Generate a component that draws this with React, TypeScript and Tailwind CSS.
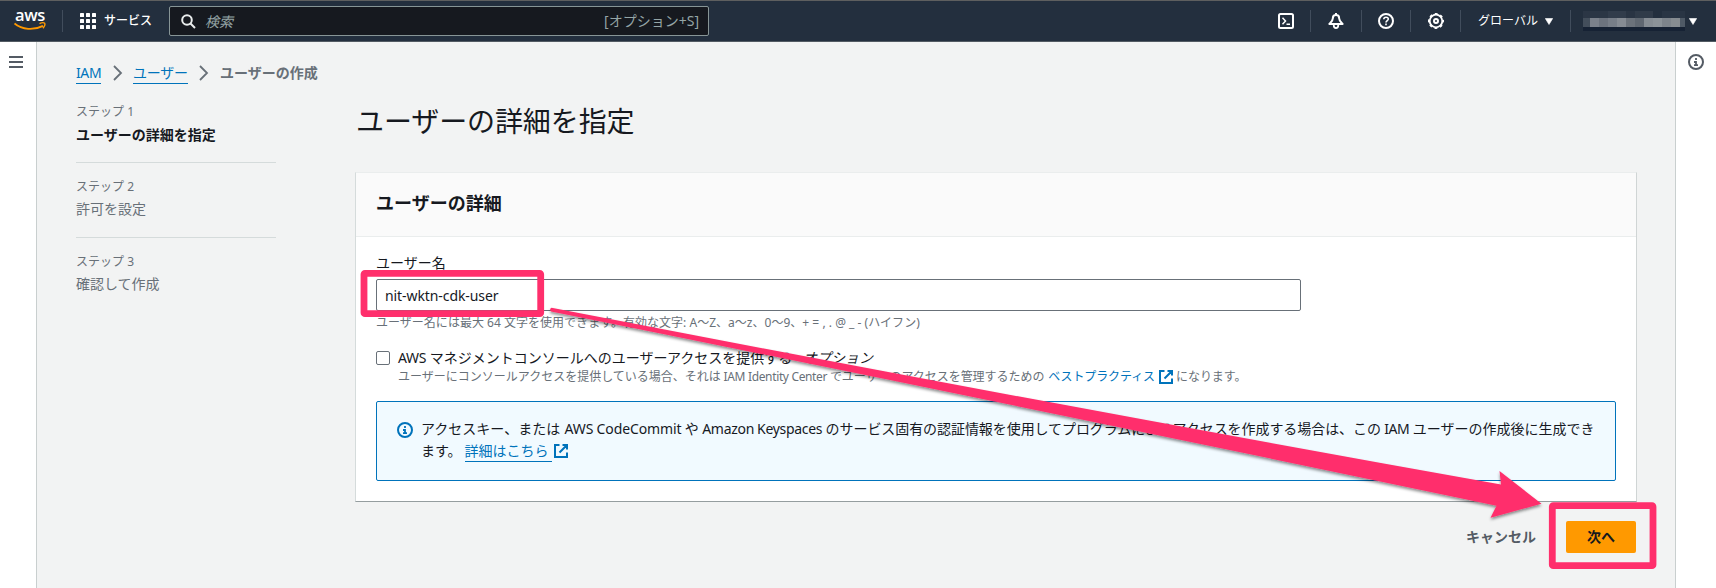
import type { ReactNode } from "react";

const ja = "font-['Noto_Sans','Noto_Sans_CJK_JP',sans-serif]";

function Divider() {
  return <span className="h-[22px] w-px bg-[#414d5c]" />;
}

function Caret() {
  return (
    <svg width="8" height="7" viewBox="0 0 8 7" className="shrink-0">
      <path d="M0.3 0.5h7.4L4 6.5z" fill="#fff" stroke="#fff" strokeWidth="0.6" strokeLinejoin="round" />
    </svg>
  );
}

function InfoIcon({ className }: { className: string }) {
  return (
    <svg width="16" height="16" viewBox="0 0 16 16" className={className} fill="none" stroke="currentColor" strokeWidth="2">
      <circle cx="8" cy="8" r="7" />
      <path d="M6 8h2v3M6 11.2h4M8 6V4" strokeWidth="1.8" />
    </svg>
  );
}

function ExternalIcon({ className }: { className: string }) {
  return (
    <svg width="14" height="14" viewBox="0 0 14 14" className={className} fill="none" stroke="currentColor" strokeWidth="2">
      <path d="M13 8.5V13H1V1h4.5M8.5 1H13v4.5M13 1L5.5 8.5" />
    </svg>
  );
}

function Chevron() {
  return (
    <svg width="10" height="16" viewBox="0 0 10 16" fill="none" stroke="#687078" strokeWidth="1.8">
      <path d="M1 1l7 7-7 7" />
    </svg>
  );
}

function Latin({ children, className }: { children: ReactNode; className: string }) {
  return <span className={className}>{children}</span>;
}

function AwsLogo() {
  return (
    <span className="relative block h-[22px] w-[34px]">
      <span className="absolute left-[1px] top-[-5px] font-['Open_Sans',sans-serif] text-[16.5px] font-semibold leading-[20px] tracking-[-0.4px] text-white">
        aws
      </span>
      <svg width="34" height="22" viewBox="0 0 34 22" className="absolute left-0 top-0" fill="none" stroke="#ff9900">
        <path d="M0.5 13.5C8 20 20 20.5 29 15.8" strokeWidth="1.9" />
        <path d="M25.5 13.6c2-1 4.5-1 5.2-.4.4.8-.3 3.3-1.8 5" strokeWidth="1.4" />
      </svg>
    </span>
  );
}

function Header() {
  return (
    <header className="flex h-[42px] shrink-0 items-center border-b border-t border-b-[#535b63] border-t-[#5e5f5f] bg-[#232f3e] text-white">
      <div className="flex w-[169px] items-center">
        <div className="ml-[14px] w-[48px]">
          <AwsLogo />
        </div>
        <Divider />
        <svg width="16" height="16" viewBox="0 0 16 16" fill="#fff" className="ml-[17px]">
          {[0, 6, 12].map((y) => [0, 6, 12].map((x) => <rect key={`${x}-${y}`} x={x} y={y} width="4" height="4" rx="0.6" />))}
        </svg>
        <span className="ml-[8px] pb-px text-[12px] font-medium leading-[18px]">サービス</span>
      </div>
      <div className="flex h-[30px] w-[540px] items-center rounded-[2px] border border-[#879596] bg-[#16191f] text-[14px] text-[#95a5a6]">
        <svg width="15" height="15" viewBox="0 0 15 15" fill="none" stroke="#eaeded" strokeWidth="2" className="ml-[11px]">
          <circle cx="6" cy="6" r="4.8" />
          <path d="M9.5 9.5l4.5 4.5" />
        </svg>
        <span className="ml-[9px] italic">検索</span>
        <span className="ml-auto mr-[9px] pb-px">[オプション+S]</span>
      </div>
      <div className="ml-auto flex items-center">
        <svg width="16" height="16" viewBox="0 0 16 16" fill="none" stroke="#fff" strokeWidth="2">
          <rect x="1" y="1" width="14" height="14" rx="1.5" />
          <path d="M4.5 4.8L7.5 8l-3 3.2M8.5 11.3H12" strokeWidth="1.5" />
        </svg>
        <span className="ml-[16px] mr-[17px] flex"><Divider /></span>
        <svg width="16" height="16" viewBox="0 0 16 16" fill="none" stroke="#fff" strokeWidth="2" strokeLinejoin="round">
          <path d="M8 2C5.6 2 4.8 3.8 4.8 5.4 4.8 7.6 3.4 8.8 1.4 11h13.2C12.6 8.8 11.2 7.6 11.2 5.4 11.2 3.8 10.4 2 8 2zM8 0v2" />
          <path d="M5.8 11.5v1.3a2.2 2.2 0 0 0 4.4 0v-1.3" strokeWidth="1.8" />
        </svg>
        <span className="ml-[17px] mr-[16px] flex"><Divider /></span>
        <svg width="16" height="16" viewBox="0 0 16 16" fill="none" stroke="#fff" strokeWidth="2">
          <circle cx="8" cy="8" r="7" />
          <path d="M5.8 6.3C5.8 3.5 10.3 3.6 10.3 6.1 10.3 7.6 8 7.7 8 9.6M8 10.6v1.7" strokeWidth="1.6" />
        </svg>
        <span className="ml-[16px] mr-[17px] flex"><Divider /></span>
        <svg width="16" height="16" viewBox="0 0 16 16" fill="none" stroke="#fff">
          <circle cx="8" cy="8" r="6.3" strokeWidth="1.8" />
          <circle cx="8" cy="8" r="7.3" strokeWidth="1.4" strokeDasharray="2.9 2.834" strokeDashoffset="1.45" />
          <circle cx="8" cy="8" r="2" strokeWidth="2" />
        </svg>
        <span className="ml-[16px] mr-[17px] flex"><Divider /></span>
        <span className="pb-px text-[12px] leading-[18px]">グローバル</span>
        <span className="ml-[7px]"><Caret /></span>
        <span className="ml-[17px] mr-[12px] flex"><Divider /></span>
        <div className="flex h-[20px] w-[102px] flex-col">
          <div className="flex h-[7px]">
            <span className="w-[25px] bg-[#2b3645]" />
            <span className="w-[18px] bg-[#313c4b]" />
            <span className="w-[9px] bg-[#293443]" />
            <span className="w-[18px] bg-[#303b49]" />
            <span className="w-[9px] bg-[#232f3e]" />
            <span className="w-[23px] bg-[#293544]" />
          </div>
          <div className="flex h-[9px]">
            <span className="w-[7px] bg-[#434e5b]" />
            <span className="w-[9px] bg-[#7b818b]" />
            <span className="w-[9px] bg-[#6c737e]" />
            <span className="w-[9px] bg-[#777e88]" />
            <span className="w-[9px] bg-[#858b93]" />
            <span className="w-[9px] bg-[#6b727b]" />
            <span className="w-[9px] bg-[#5f6771]" />
            <span className="w-[9px] bg-[#858c93]" />
            <span className="w-[9px] bg-[#8b9298]" />
            <span className="w-[9px] bg-[#7d848b]" />
            <span className="w-[9px] bg-[#868c91]" />
            <span className="w-[5px] bg-[#4f5a66]" />
          </div>
          <div className="h-[4px] bg-[#162234]" />
        </div>
        <span className="ml-[4px] mr-[19px]"><Caret /></span>
      </div>
    </header>
  );
}

function Step({ n, title, active, last }: { n: number; title: string; active?: boolean; last?: boolean }) {
  return (
    <li className={last ? "" : "mb-[13px] h-[62px] border-b border-[#d5dbdb]"}>
      <div className="text-[12px] leading-[22px] text-[#687078]">ステップ {n}</div>
      <div className={active ? "text-[14px] font-bold leading-[23px] text-[#16191f]" : "text-[14px] leading-[22px] text-[#687078]"}>
        {title}
      </div>
    </li>
  );
}

function UserCard() {
  return (
    <section className="h-[330px] w-[1282px] border border-b-[#959d9f] border-l-[#d5dbdb] border-r-[#d0d5d5] border-t-[#eaeded] bg-white">
      <div className="flex h-[64px] items-center border-b border-[#eaeded] bg-[#fafafa] px-5">
        <h2 className="pb-[4px] text-[18px] font-bold leading-[22px]">ユーザーの詳細</h2>
      </div>
      <div className="px-5 pt-[15px]">
        <label className="block text-[14px] leading-[22px]">ユーザー名</label>
        <div className="mt-[5px] flex h-[32px] w-[925px] items-center rounded-[2px] border border-[#687078] pl-[8px] text-[14px]">
          <Latin className="tracking-[-0.08px]">nit-wktn-cdk-user</Latin>
        </div>
        <p className="whitespace-nowrap pt-px text-[12px] leading-[22px] tracking-[0.02px] text-[#687078]">
          ユーザー名には最大 64 文字を使用できます。有効な文字: A〜Z、a〜z、0〜9、+ = , . @ _ - (ハイフン)
        </p>
        <div className="mt-[12px] flex">
          <span className="mt-[5px] size-[14px] rounded-[2px] border border-[#687078]" />
          <div className="ml-[8px] whitespace-nowrap pt-px">
            <div className="text-[14px] leading-[22px]">
              <Latin className="tracking-[-0.3px]">AWS</Latin> マネジメントコンソールへのユーザーアクセスを提供する <span className="-ml-px">-</span> <i>オプション</i>
            </div>
            <div className="flex items-center text-[12px] leading-[16px] text-[#687078]">
              <span>
                ユーザーにコンソールアクセスを提供している場合、それは
                <Latin className="tracking-[-0.35px]"> IAM Identity Center </Latin>
                <span className="tracking-[-0.04px]">でユーザーのアクセスを管理するための</span>
              </span>
              <span className="ml-[4px] tracking-[-0.1px] text-[#0073bb]">ベストプラクティス</span>
              <ExternalIcon className="ml-[4px] text-[#0073bb]" />
              <span className="ml-[3px] tracking-[-0.05px]">になります。</span>
            </div>
          </div>
        </div>
        <div className="mt-[16px] flex h-[80px] w-[1240px] rounded-[2px] border border-[#0073bb] bg-[#f1faff] pl-[20px] pt-[16px]">
          <InfoIcon className="mt-[4px] shrink-0 text-[#0073bb]" />
          <div className="ml-[8px] whitespace-nowrap text-[14px] leading-[22px]">
            <div className="[word-spacing:-0.3px]">
              アクセスキー、または <Latin className="ml-px tracking-[-0.1px]">AWS CodeCommit</Latin> や <Latin className="tracking-[-0.3px]">Amazon Keyspaces</Latin>{" "}
              <span className="tracking-[-0.07px]">のサービス固有の認証情報を使用してプログラムによるアクセスを作成する場合は、この</span>{" "}
              <Latin className="tracking-[-0.4px]">IAM</Latin> ユーザーの作成後に生成でき
            </div>
            <div className="flex items-center">
              <span>ます。</span>
              <span className="ml-[3px] h-[22px] w-[87px] border-b border-[#0073bb] text-[#0073bb]">詳細はこちら</span>
              <ExternalIcon className="ml-[2px] text-[#0073bb]" />
            </div>
          </div>
        </div>
      </div>
    </section>
  );
}

function Annotations() {
  return (
    <svg width="1716" height="588" viewBox="0 0 1716 588" className="pointer-events-none absolute left-0 top-0 z-10" fill="#ff2f6c">
      <defs>
        <filter id="shade" x="-5%" y="-5%" width="110%" height="115%">
          <feDropShadow dx="0" dy="2" stdDeviation="1.5" floodColor="#000" floodOpacity="0.45" />
        </filter>
      </defs>
      <rect x="364" y="273.3" width="176.7" height="40.4" rx="1" fill="none" stroke="#ff2f6c" strokeWidth="6.8" strokeLinejoin="round" />
      <rect x="1552.3" y="505.7" width="100.7" height="60" rx="1" fill="none" stroke="#ff2f6c" strokeWidth="6.8" strokeLinejoin="round" />
      <path
        d="M551.5 307.8Q1026 399.4 1501 484.5L1499.5 471 1541.5 503.7 1490.5 517.8 1496.5 505.8Q1024 406.4 551 311.5 549 309 551.5 307.8z"
        filter="url(#shade)"
      />
    </svg>
  );
}

export default function App() {
  return (
    <div className={`relative flex h-[588px] w-[1716px] flex-col overflow-hidden bg-[#f2f3f3] text-[#16191f] ${ja}`} lang="ja">
      <Header />
      <div className="flex min-h-0 flex-1">
        <aside className="w-[37px] shrink-0 border-r border-[#c9cfcf] bg-white">
          <svg width="14" height="12" viewBox="0 0 14 12" className="ml-[9px] mt-[14px]" fill="#545b64">
            <path d="M0 0h14v2H0zM0 5h14v2H0zM0 10h14v2H0z" />
          </svg>
        </aside>
        <main className="flex-1 pl-[39px]">
          <nav className="flex h-[52px] items-center pt-[10px] text-[14px]">
            <a className="h-[21px] w-[25px] border-b border-[#0073bb] leading-[20px] tracking-[-0.4px] text-[#0073bb]">IAM</a>
            <span className="ml-[12px]"><Chevron /></span>
            <a className="ml-[10px] h-[21px] w-[55px] border-b border-[#0073bb] leading-[20px] tracking-[-0.2px] text-[#0073bb]">ユーザー</a>
            <span className="ml-[11px]"><Chevron /></span>
            <span className="ml-[11px] font-bold leading-[20px] text-[#687078]">ユーザーの作成</span>
          </nav>
          <div className="flex">
            <ol className="mt-[7px] w-[200px]">
              <Step n={1} title="ユーザーの詳細を指定" active />
              <Step n={2} title="許可を設定" />
              <Step n={3} title="確認して作成" last />
            </ol>
            <div className="ml-[79px] w-[1282px]">
              <h1 className="ml-px mt-[9px] h-[69px] text-[28px] font-normal leading-[36px] tracking-[-0.1px]">ユーザーの詳細を指定</h1>
              <UserCard />
              <div className="mr-px mt-[19px] flex items-center justify-end text-[14px] font-bold">
                <span className="pb-px text-[#545b64]">キャンセル</span>
                <button className="ml-[30px] h-[32px] w-[70px] rounded-[2px] bg-[#ff9900] pb-px text-[#16191f]">次へ</button>
              </div>
            </div>
          </div>
        </main>
        <aside className="w-[41px] shrink-0 border-l border-[#c9cfcf] bg-white">
          <InfoIcon className="ml-[12px] mt-[12px] text-[#545b64]" />
        </aside>
      </div>
      <Annotations />
    </div>
  );
}
